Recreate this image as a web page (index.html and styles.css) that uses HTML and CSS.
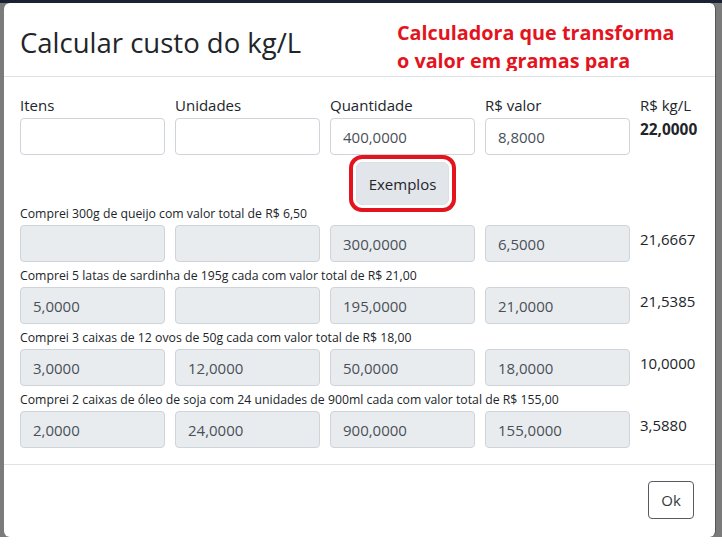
FILE: index.html
```html
<!DOCTYPE html>
<html lang="pt-BR">
<head>
<meta charset="utf-8">
<title>Calcular custo do kg/L</title>
<link rel="stylesheet" href="styles.css">
</head>
<body>
<div class="backdrop"></div>
<div class="modal">
  <div class="modal-header">
    <h5 class="modal-title">Calcular custo do kg/L</h5>
    <div class="note">Calculadora que transforma<br>o valor em gramas para</div>
  </div>
  <div class="modal-body">
    <div class="grid">
      <div class="field"><label class="lbl">Itens</label><input class="inp" type="text" value=""></div>
      <div class="field"><label class="lbl">Unidades</label><input class="inp" type="text" value=""></div>
      <div class="field"><label class="lbl">Quantidade</label><input class="inp" type="text" value="400,0000"></div>
      <div class="field"><label class="lbl">R$ valor</label><input class="inp" type="text" value="8,8000"></div>
      <div class="field"><span class="lbl">R$ kg/L</span><span class="result bold">22,0000</span></div>
    </div>
    <div class="grid btn-row">
      <button class="btn-ex" type="button">Exemplos</button>
    </div>

    <div class="example">
      <div class="ex-label">Comprei 300g de queijo com valor total de R$ 6,50</div>
      <div class="grid">
        <input class="inp" type="text" value="" disabled>
        <input class="inp" type="text" value="" disabled>
        <input class="inp" type="text" value="300,0000" disabled>
        <input class="inp" type="text" value="6,5000" disabled>
        <span class="result top">21,6667</span>
      </div>
    </div>
    <div class="example">
      <div class="ex-label">Comprei 5 latas de sardinha de 195g cada com valor total de R$ 21,00</div>
      <div class="grid">
        <input class="inp" type="text" value="5,0000" disabled>
        <input class="inp" type="text" value="" disabled>
        <input class="inp" type="text" value="195,0000" disabled>
        <input class="inp" type="text" value="21,0000" disabled>
        <span class="result top">21,5385</span>
      </div>
    </div>
    <div class="example">
      <div class="ex-label">Comprei 3 caixas de 12 ovos de 50g cada com valor total de R$ 18,00</div>
      <div class="grid">
        <input class="inp" type="text" value="3,0000" disabled>
        <input class="inp" type="text" value="12,0000" disabled>
        <input class="inp" type="text" value="50,0000" disabled>
        <input class="inp" type="text" value="18,0000" disabled>
        <span class="result top">10,0000</span>
      </div>
    </div>
    <div class="example">
      <div class="ex-label">Comprei 2 caixas de óleo de soja com 24 unidades de 900ml cada com valor total de R$ 155,00</div>
      <div class="grid">
        <input class="inp" type="text" value="2,0000" disabled>
        <input class="inp" type="text" value="24,0000" disabled>
        <input class="inp" type="text" value="900,0000" disabled>
        <input class="inp" type="text" value="155,0000" disabled>
        <span class="result top">3,5880</span>
      </div>
    </div>
  </div>
  <div class="modal-footer">
    <button class="btn-ok" type="button">Ok</button>
  </div>
</div>
</body>
</html>
```
FILE: styles.css
```css
* { box-sizing: border-box; }
html, body {
  margin: 0;
  padding: 0;
  width: 722px;
  height: 548px;
  overflow: hidden;
  background: #ffffff;
  font-family: "Open Sans", "Noto Sans", sans-serif;
  color: #212529;
}
.backdrop {
  height: 537px;
  background: #7b7b7b;
  border-top: 3px solid #1c2236;
}
.modal {
  position: absolute;
  left: 4px;
  top: 3px;
  width: 712px;
  height: 534px;
  background: #ffffff;
  border-radius: 6px;
  border-right: 1px solid #555;
  display: flex;
  flex-direction: column;
}
.modal-header {
  position: relative;
  padding: 19px 16px 13px 16px;
  border-bottom: 1px solid #dee2e6;
}
.modal-title {
  margin: 0;
  font-size: 27.5px;
  font-weight: 500;
  line-height: 41px;
  color: #212529;
}
.note {
  position: absolute;
  left: 393px;
  top: 16px;
  height: 52px;
  overflow: hidden;
  font-size: 19.8px;
  font-weight: 700;
  line-height: 28px;
  color: #e3141d;
}
.modal-body {
  padding: 16px 16px 16px 16px;
  border-bottom: 1px solid #dee2e6;
}
.grid {
  display: grid;
  grid-template-columns: 145px 145px 145px 145px 60px;
  column-gap: 10px;
}
.field {
  display: flex;
  flex-direction: column;
}
.lbl {
  display: block;
  font-size: 15px;
  line-height: 24px;
  margin-bottom: 1px;
  color: #212529;
  white-space: nowrap;
}
.inp {
  display: block;
  width: 145px;
  height: 37px;
  padding: 0 12px;
  font-family: inherit;
  font-size: 15px;
  color: #495057;
  background: #ffffff;
  border: 1px solid #ced4da;
  border-radius: 4px;
  margin: 0;
}
.inp:disabled {
  background: #e9ecef;
  color: #495057;
  -webkit-text-fill-color: #495057;
  opacity: 1;
}
.result {
  font-size: 15px;
  line-height: 24px;
  color: #212529;
  white-space: nowrap;
}
.result.bold { font-weight: 700; font-size: 15.4px; }
.result.top { padding-top: 2px; }
.btn-row {
  margin-top: 7px;
}
.btn-ex {
  grid-column: 3;
  justify-self: center;
  height: 43px;
  padding: 0 12px;
  font-family: inherit;
  font-size: 15px;
  color: #212529;
  background: #e2e6ea;
  border: 1px solid #dae0e5;
  border-radius: 6px;
  outline: 4px solid #e3141d;
  outline-offset: 3px;
}
.example {
  margin-bottom: 5px;
}
.example:last-child { margin-bottom: 0; }
.ex-label {
  font-size: 12.25px;
  line-height: 18px;
  margin-bottom: 2px;
  color: #212529;
  white-space: nowrap;
}
.modal-footer {
  display: flex;
  justify-content: flex-end;
  padding: 16px 21px 16px 16px;
}
.btn-ok {
  width: 46px;
  height: 38px;
  font-family: inherit;
  font-size: 15px;
  color: #343a40;
  background: #ffffff;
  border: 1px solid #555b61;
  border-radius: 4px;
  padding: 0;
}
```
